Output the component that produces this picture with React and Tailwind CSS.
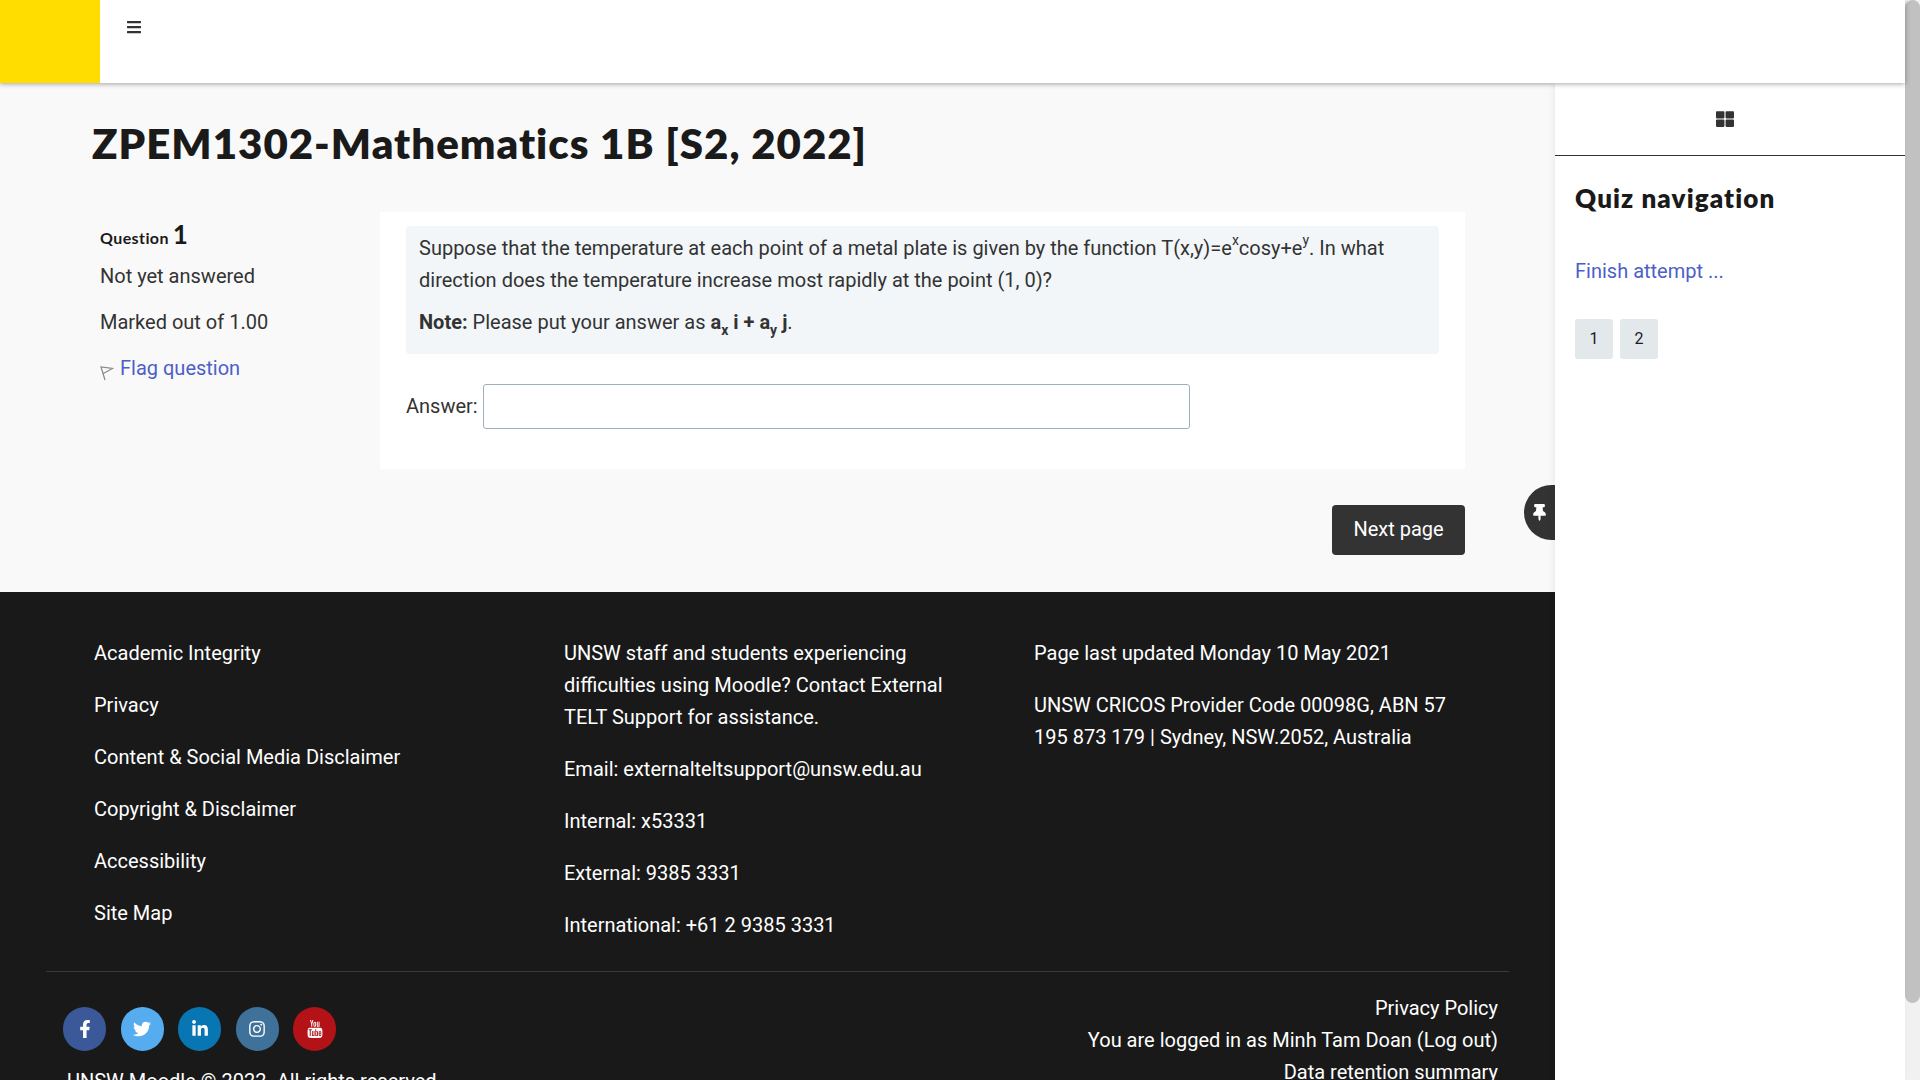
import React from "react";
import { FaBars, FaThLarge, FaThumbtack, FaFacebookF, FaTwitter, FaLinkedinIn, FaInstagram } from "react-icons/fa";
import { TfiYoutube } from "react-icons/tfi";

const BODY = "font-['Roboto',sans-serif]";
const HEAD = "font-['Lato',sans-serif]";

const LINKS = ["Academic Integrity", "Privacy", "Content & Social Media Disclaimer", "Copyright & Disclaimer", "Accessibility", "Site Map"];
const CONTACT = ["Email: externalteltsupport@unsw.edu.au", "Internal: x53331", "External: 9385 3331", "International: +61 2 9385 3331"];

const SOCIAL = [
  { icon: FaFacebookF, bg: "bg-[#3b5998]", size: 18 },
  { icon: FaTwitter, bg: "bg-[#55acee]", size: 18 },
  { icon: FaLinkedinIn, bg: "bg-[#0976b4]", size: 18 },
  { icon: FaInstagram, bg: "bg-[#3f729b]", size: 18 },
  { icon: TfiYoutube, bg: "bg-[#b31217]", size: 18 },
];

function FlagIcon() {
  return (
    <svg width="14" height="16" viewBox="0 0 14 16" fill="none" stroke="#888" strokeWidth="1.2" className="mt-[13px] shrink-0">
      <path d="M5 15 L1 2 L12.5 3.5 L3.3 8.5" />
    </svg>
  );
}

function Sidebar() {
  return (
    <aside className="w-[350px] shrink-0 bg-white shadow-[-2px_0_6px_rgba(0,0,0,0.06)] z-[1]">
      <div className="h-[73px] flex items-center justify-center border-b border-[#333] pr-[10px]">
        <FaThLarge size={18} className="text-[#333]" />
      </div>
      <div className="px-[20px] pt-[26px]">
        <h5 className={`${HEAD} text-[26px] leading-[32px] font-extrabold tracking-[1.1px] text-[#1a1a1a]`}>Quiz navigation</h5>
        <a className="block mt-[41px] leading-[32px] text-[#4c5fc7]">Finish attempt ...</a>
        <div className="flex gap-[7px] mt-[32px]">
          <span className="w-[38px] h-[40px] rounded-[3px] bg-[#e3e8ea] text-[16px] text-[#1a1a2e] flex items-center justify-center">1</span>
          <span className="w-[38px] h-[40px] rounded-[3px] bg-[#e3e8ea] text-[16px] text-[#1a1a2e] flex items-center justify-center">2</span>
        </div>
      </div>
    </aside>
  );
}

function Question() {
  return (
    <div className="flex mt-[44px]">
      <div className="w-[288px] pl-[8px] shrink-0 text-[#333]">
        <h3 className={`${HEAD} flex items-baseline gap-[4px] h-[32px] pt-[9px] font-bold text-[#1a1a1a] tracking-[0.4px]`}>
          <span className="text-[16px]">Question</span>
          <span className="text-[26px] leading-[26px]">1</span>
        </h3>
        <div className="mt-[16px] leading-[32px] mb-[14px]">Not yet answered</div>
        <div className="leading-[32px] mb-[14px]">Marked out of 1.00</div>
        <div className="flex gap-[6px] leading-[32px] h-[32px]">
          <FlagIcon />
          <a className="text-[#4c5fc7]">Flag question</a>
        </div>
      </div>
      <div className="w-[1085px] h-[257px] bg-white px-[26px] pt-[14px]">
        <div className="bg-[#f2f6f9] rounded-[4px] w-[1033px] h-[128px] px-[13px] pt-[6px] text-[#333]">
          <p className="leading-[32px]">
            Suppose that the temperature at each point of a metal plate is given by the function T(x,y)=e<sup className="text-[14px] align-[3px] leading-[0]">x</sup>cosy+e<sup className="text-[14px] align-[3px] leading-[0]">y</sup>. In what direction does the temperature increase most rapidly at the point (1, 0)?
          </p>
          <p className="leading-[32px] mt-[10px]">
            <strong className="font-bold">Note:</strong> Please put your answer as <strong className="font-bold">a<sub className="text-[14px] align-[-2px] leading-[0]">x</sub> i + a<sub className="text-[14px] align-[-2px] leading-[0]">y</sub> j</strong>.
          </p>
        </div>
        <div className="flex items-center gap-[5px] mt-[30px] text-[#333]">
          <label className="pb-[2px]">Answer:</label>
          <div className="w-[707px] h-[45px] bg-white border border-[#9fb0bb] rounded-[3px]" />
        </div>
      </div>
    </div>
  );
}

function Footer() {
  return (
    <footer className="bg-[#191919] text-white flex-1 px-[46px] pt-[45px] overflow-hidden">
      <div className="flex pl-[48px] h-[335px] border-b border-[#3a3a3a]">
        <div className="w-[470px] shrink-0">
          {LINKS.map((l) => (
            <p key={l} className="leading-[32px] mb-[20px]">{l}</p>
          ))}
        </div>
        <div className="w-[470px] shrink-0 pr-[85px]">
          <p className="leading-[32px] mb-[20px]">UNSW staff and students experiencing difficulties using Moodle? Contact External TELT Support for assistance.</p>
          {CONTACT.map((l) => (
            <p key={l} className="leading-[32px] mb-[20px]">{l}</p>
          ))}
        </div>
        <div className="flex-1 pr-[50px]">
          <p className="leading-[32px] mb-[20px]">Page last updated Monday 10 May 2021</p>
          <p className="leading-[32px]">UNSW CRICOS Provider Code 00098G, ABN 57 195 873 179 | Sydney, NSW.2052, Australia</p>
        </div>
      </div>
      <div className="flex justify-between">
        <div className="pl-[17px] pt-[35px]">
          <div className="flex gap-[14.5px]">
            {SOCIAL.map((s, i) => {
              const Icon = s.icon;
              return (
                <span key={i} className={`w-[43px] h-[44px] rounded-full flex items-center justify-center ${s.bg}`}>
                  <Icon size={s.size} color="#fff" />
                </span>
              );
            })}
          </div>
          <p className="leading-[32px] mt-[14px] pl-[4px]">UNSW Moodle © 2022. All rights reserved.</p>
        </div>
        <div className="text-right pr-[11px] pt-[20px]">
          <p className="leading-[32px]">Privacy Policy</p>
          <p className="leading-[32px]">You are logged in as Minh Tam Doan (Log out)</p>
          <p className="leading-[32px]">Data retention summary</p>
        </div>
      </div>
    </footer>
  );
}

export default function App() {
  return (
    <div className={`${BODY} flex h-screen overflow-hidden bg-white text-[20px]`}>
      <div className="flex-1 min-w-0 flex flex-col">
        <header className="h-[83px] shrink-0 bg-white flex shadow-[0_1px_5px_rgba(0,0,0,0.35)] relative z-10">
          <div className="w-[100px] bg-[#ffdd00]" />
          <FaBars size={16} className="ml-[26px] mt-[19px] text-[#333]" />
        </header>
        <div className="flex flex-1 min-h-0">
          <main className="w-[1555px] shrink-0 flex flex-col relative">
            <section className="h-[509px] shrink-0 bg-[#f9f9f9] pl-[92px] pt-[35px]">
              <h1 className={`${HEAD} text-[42px] leading-[50px] font-extrabold tracking-[1px] text-[#1a1a1a]`}>ZPEM1302-Mathematics 1B [S2, 2022]</h1>
              <Question />
              <button className="block ml-[1240px] mt-[36px] w-[133px] h-[50px] pb-[2px] bg-[#333] rounded-[4px] text-white">Next page</button>
            </section>
            <Footer />
            <div className="absolute left-[1524px] top-[402px] w-[31px] h-[55px] bg-[#333] rounded-l-full flex items-center justify-center pr-[1px]">
              <FaThumbtack size={17} color="#fff" />
            </div>
          </main>
          <Sidebar />
        </div>
      </div>
      <div className="w-[15px] shrink-0 bg-[#f1f1f1]">
        <div className="h-[1003px] bg-[#c1c1c1] rounded-[8px]" />
      </div>
    </div>
  );
}
